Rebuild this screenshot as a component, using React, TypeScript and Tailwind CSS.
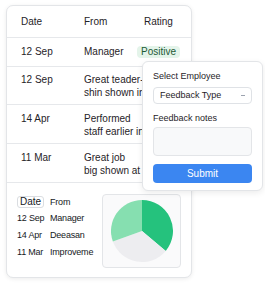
import React from "react";

const rows = [
  { date: "12 Sep", from: ["Manager"], rating: "Positive" },
  { date: "12 Sep", from: ["Great teader-", "shin shown in the"] },
  { date: "14 Apr", from: ["Performed", "staff earlier in the"] },
  { date: "11 Mar", from: ["Great job", "big shown at"] },
];

const mini = [
  { date: "12 Sep", from: "Manager" },
  { date: "14 Apr", from: "Deeasan" },
  { date: "11 Mar", from: "Improveme" },
];

const Pie = () => (
  <svg width="62" height="62" viewBox="0 0 62 62">
    <path d="M31 31 L31 0 A31 31 0 0 1 54.74 50.93 Z" fill="#25c27d" />
    <path d="M31 31 L54.74 50.93 A31 31 0 0 1 1.87 41.6 Z" fill="#ededf0" />
    <path d="M31 31 L1.87 41.6 A31 31 0 0 1 31 0 Z" fill="#86dfb0" />
  </svg>
);

const App = () => {
  return (
    <div
      className="relative w-[265px] h-[286px] bg-white text-[#1f2328] overflow-hidden"
      style={{ fontFamily: '"Liberation Sans", Arial, sans-serif' }}
    >
      <div className="ml-[6px] mt-[5px] w-[186px] h-[273px] rounded-[7px] border border-[#e3e5e8] bg-white shadow-[0_1px_4px_rgba(0,0,0,0.08)] overflow-hidden flex flex-col">
        <div className="flex items-center h-[32px] border-b border-[#e6e8eb] text-[10px]">
          <div className="w-[77px] pl-[14px]">Date</div>
          <div className="w-[53px]">From</div>
          <div className="pl-[7px]">Rating</div>
        </div>
        {rows.map((r, i) => (
          <div
            key={i}
            className={`flex border-b border-[#e6e8eb] text-[10px] leading-[12px] ${
              i === 0 ? "h-[29px] items-center" : i === 1 ? "h-[38px] pt-[7px]" : "h-[39px] pt-[8px]"
            }`}
          >
            <div className="w-[77px] pl-[14px] shrink-0">{r.date}</div>
            <div className="w-[53px] shrink-0 whitespace-nowrap">
              {r.from.map((l) => (
                <div key={l} className={i === 0 ? "" : "leading-[12.5px]"}>
                  {l}
                </div>
              ))}
            </div>
            {r.rating && (
              <div className="px-[4px] h-[12px] leading-[12px] rounded-[4px] bg-[#e4f4ea] text-[#1d5a35]">
                {r.rating}
              </div>
            )}
          </div>
        ))}
        <div className="flex pl-[10px] pt-[13px] gap-[10px]">
          <div className="w-[75px] shrink-0 text-[9px] font-medium tracking-[-0.2px] whitespace-nowrap text-[#16191d]">
            <div className="flex items-center h-[13px]">
              <div className="w-[33px] shrink-0">
                <span className="inline-block border border-[#dadde1] rounded-[3px] px-[2px] leading-[10px] text-[10px] tracking-normal">
                  Date
                </span>
              </div>
              <div>From</div>
            </div>
            {mini.map((m) => (
              <div key={m.date} className="flex h-[17px] items-end pb-[1px]">
                <div className="w-[33px] shrink-0">{m.date}</div>
                <div>{m.from}</div>
              </div>
            ))}
          </div>
          <div className="w-[79px] h-[74px] -mt-[2px] rounded-[4px] border border-[#e3e5e8] bg-[#fafafb] flex items-center justify-center">
            <Pie />
          </div>
        </div>
      </div>

      <div className="absolute left-[142px] top-[61px] w-[121px] h-[130px] rounded-[6px] border border-[#e3e5e8] bg-white shadow-[0_2px_6px_rgba(0,0,0,0.08)] px-[10px] pt-[9px] text-[9px]">
        <div className="leading-[11px]">Select Employee</div>
        <div className="mt-[5px] h-[17px] rounded-[4px] border border-[#dfe2e6] flex items-center justify-between px-[6px]">
          <span>Feedback Type</span>
          <span className="w-[4px] h-[1px] bg-[#9ca3af]" />
        </div>
        <div className="mt-[9px] leading-[11px]">Feedback notes</div>
        <div className="mt-[3px] h-[29px] rounded-[4px] border border-[#e3e5e8] bg-[#f8f9fa]" />
        <button className="mt-[8px] w-full h-[19px] rounded-[4px] bg-[#3b86f1] text-white text-[10px] font-medium">
          Submit
        </button>
      </div>
    </div>
  );
};

export default App;
